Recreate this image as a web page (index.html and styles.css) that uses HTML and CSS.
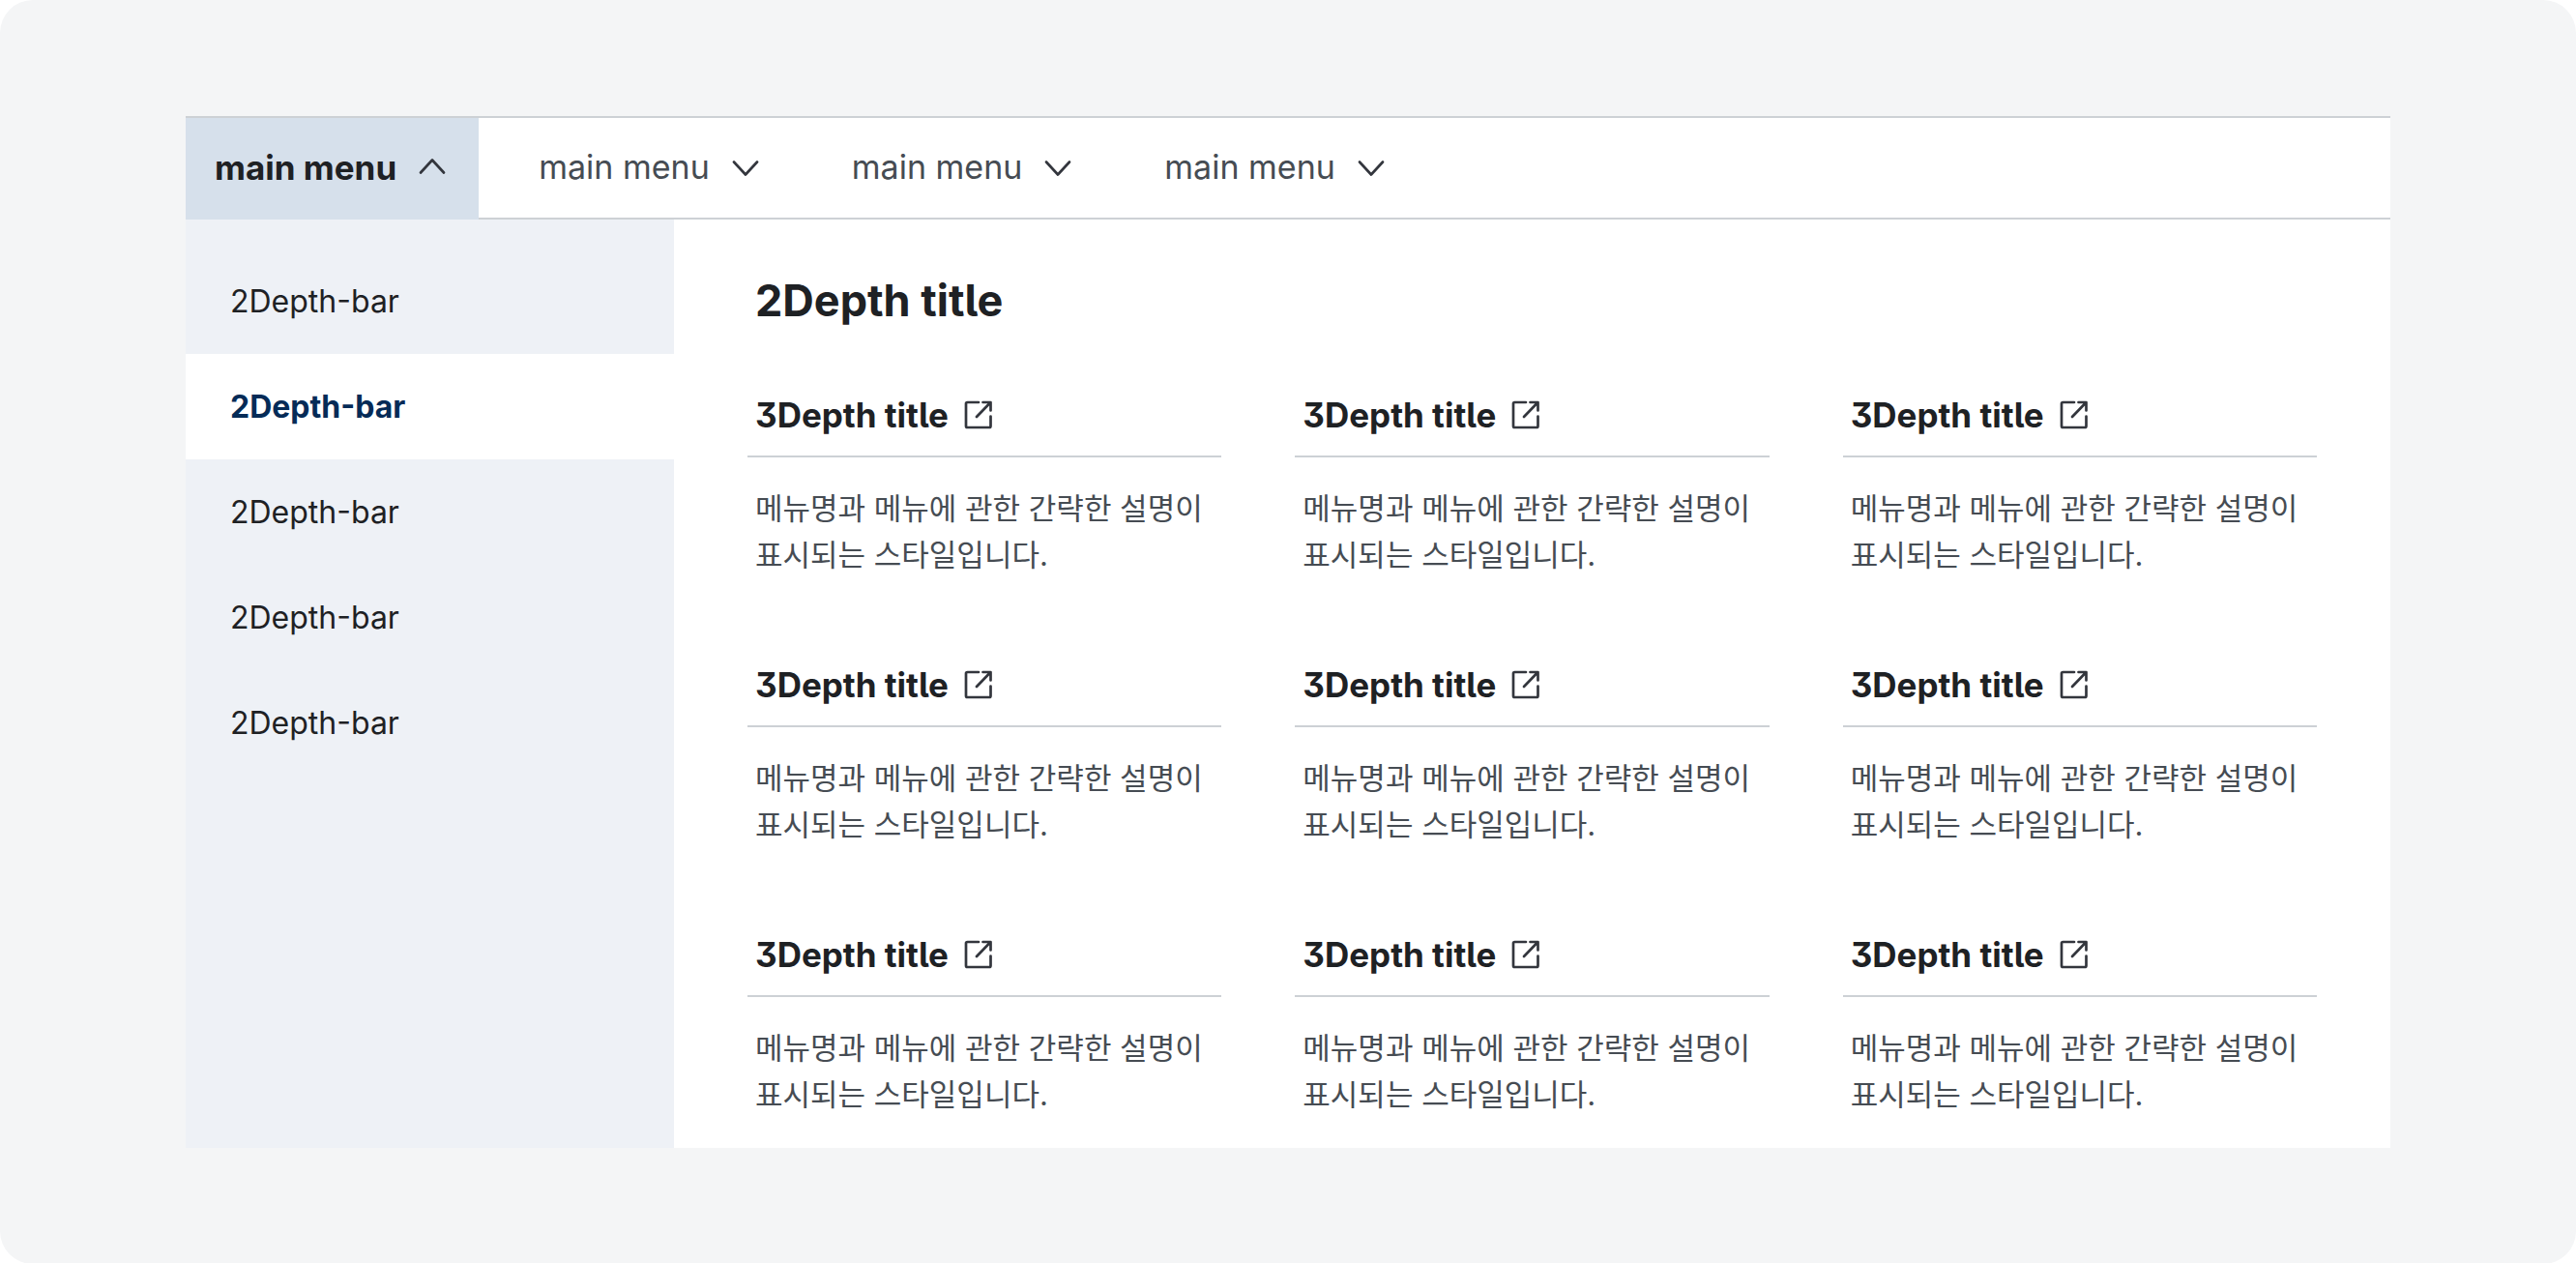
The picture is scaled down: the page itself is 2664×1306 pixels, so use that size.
FILE: index.html
```html
<!DOCTYPE html>
<html lang="ko">
<head>
<meta charset="utf-8">
<meta name="viewport" content="width=device-width, initial-scale=1">
<title>Main menu</title>
<link rel="stylesheet" href="styles.css">
</head>
<body>
<svg class="sprite" aria-hidden="true">
  <symbol id="chevron" viewBox="0 0 36 36"><path d="M6 12.5 18 25.5 30 12.5"/></symbol>
  <symbol id="external" viewBox="0 0 36 36"><path d="M18 5H6.5Q5 5 5 6.5V29.5Q5 31 6.5 31H29Q30.5 31 30.5 29.5V19.5M22.5 5H30.5V13.5M30 5.5 16 20"/></symbol>
</svg>
<div class="canvas">
  <div class="menu">
    <nav class="tabs" aria-label="main menu">
      <button class="tab tab-active" type="button" aria-expanded="true">main menu<svg class="icon"><use href="#chevron"/></svg></button>
      <button class="tab" type="button" aria-expanded="false">main menu<svg class="icon"><use href="#chevron"/></svg></button>
      <button class="tab" type="button" aria-expanded="false">main menu<svg class="icon"><use href="#chevron"/></svg></button>
      <button class="tab" type="button" aria-expanded="false">main menu<svg class="icon"><use href="#chevron"/></svg></button>
    </nav>
    <div class="panel">
      <nav class="side" aria-label="2Depth">
        <a class="side-link" href="#">2Depth-bar</a>
        <a class="side-link side-link-active" href="#" aria-current="true">2Depth-bar</a>
        <a class="side-link" href="#">2Depth-bar</a>
        <a class="side-link" href="#">2Depth-bar</a>
        <a class="side-link" href="#">2Depth-bar</a>
      </nav>
      <section class="content">
        <h2 class="title">2Depth title</h2>
        <div class="grid">
          <article class="card"><h3 class="card-head"><a class="card-link" href="#">3Depth title<svg class="icon"><use href="#external"/></svg></a></h3><p class="desc">메뉴명과 메뉴에 관한 간략한 설명이 표시되는 스타일입니다.</p></article>
          <article class="card"><h3 class="card-head"><a class="card-link" href="#">3Depth title<svg class="icon"><use href="#external"/></svg></a></h3><p class="desc">메뉴명과 메뉴에 관한 간략한 설명이 표시되는 스타일입니다.</p></article>
          <article class="card"><h3 class="card-head"><a class="card-link" href="#">3Depth title<svg class="icon"><use href="#external"/></svg></a></h3><p class="desc">메뉴명과 메뉴에 관한 간략한 설명이 표시되는 스타일입니다.</p></article>
          <article class="card"><h3 class="card-head"><a class="card-link" href="#">3Depth title<svg class="icon"><use href="#external"/></svg></a></h3><p class="desc">메뉴명과 메뉴에 관한 간략한 설명이 표시되는 스타일입니다.</p></article>
          <article class="card"><h3 class="card-head"><a class="card-link" href="#">3Depth title<svg class="icon"><use href="#external"/></svg></a></h3><p class="desc">메뉴명과 메뉴에 관한 간략한 설명이 표시되는 스타일입니다.</p></article>
          <article class="card"><h3 class="card-head"><a class="card-link" href="#">3Depth title<svg class="icon"><use href="#external"/></svg></a></h3><p class="desc">메뉴명과 메뉴에 관한 간략한 설명이 표시되는 스타일입니다.</p></article>
          <article class="card"><h3 class="card-head"><a class="card-link" href="#">3Depth title<svg class="icon"><use href="#external"/></svg></a></h3><p class="desc">메뉴명과 메뉴에 관한 간략한 설명이 표시되는 스타일입니다.</p></article>
          <article class="card"><h3 class="card-head"><a class="card-link" href="#">3Depth title<svg class="icon"><use href="#external"/></svg></a></h3><p class="desc">메뉴명과 메뉴에 관한 간략한 설명이 표시되는 스타일입니다.</p></article>
          <article class="card"><h3 class="card-head"><a class="card-link" href="#">3Depth title<svg class="icon"><use href="#external"/></svg></a></h3><p class="desc">메뉴명과 메뉴에 관한 간략한 설명이 표시되는 스타일입니다.</p></article>
        </div>
      </section>
    </div>
  </div>
</div>
</body>
</html>
```
FILE: styles.css
```css
* { box-sizing: border-box; }

body {
  margin: 0;
  background: #fff;
  color: #1e2124;
  font-family: Inter, "Noto Sans CJK KR", sans-serif;
  font-feature-settings: "cv05", "cv09";
}

h2, h3, p { margin: 0; }

a { color: inherit; text-decoration: none; }

.sprite { display: none; }

.icon {
  flex: none;
  width: 36px;
  height: 36px;
  fill: none;
  stroke: #33363d;
  stroke-width: 2.7;
  stroke-linecap: round;
  stroke-linejoin: round;
}

.canvas {
  min-height: 100vh;
  padding: 120px 192px;
  border-radius: 34px;
  background: #f4f5f6;
}

.menu { background: #fff; }

.tabs {
  display: flex;
  gap: 32px;
  border-top: 2px solid #cdd1d5;
  box-shadow: inset 0 -2px #cdd1d5;
}

.tab {
  display: flex;
  align-items: center;
  gap: 19px;
  height: 105px;
  padding: 0 30px 4px;
  border: 0;
  background: none;
  color: #464c53;
  font: inherit;
  font-size: 34px;
  font-feature-settings: inherit;
}

.tab-active {
  background: #d6e0eb;
  color: #1e2124;
  font-size: 35px;
  font-weight: 700;
}

.tab-active .icon { transform: rotate(180deg); }

.panel { display: flex; }

.side {
  flex: 0 0 505px;
  padding-top: 30px;
  background: #eef1f6;
}

.side-link {
  display: block;
  padding: 0 46px;
  font-size: 32px;
  font-feature-settings: "cv05", "cv09", "case";
  line-height: 109px;
}

.side-link-active {
  background: #fff;
  color: #052b57;
  font-weight: 700;
}

.content {
  flex: 1;
  padding: 51px 76px 31px;
}

.title {
  margin-bottom: 58px;
  padding: 0 8px;
  font-size: 45px;
  font-weight: 700;
  line-height: 66px;
}

.grid {
  display: grid;
  grid-template-columns: repeat(3, 1fr);
  gap: 83px 76px;
}

.card-head {
  padding: 0 8px 15px;
  border-bottom: 2px solid #cdd1d5;
  font-size: 35px;
  font-weight: 700;
  line-height: 54px;
}

.card-link {
  display: flex;
  align-items: center;
  gap: 13px;
}

.desc {
  padding: 29px 8px 0;
  color: #464c53;
  font-size: 31px;
  line-height: 48px;
  word-break: keep-all;
}
```
